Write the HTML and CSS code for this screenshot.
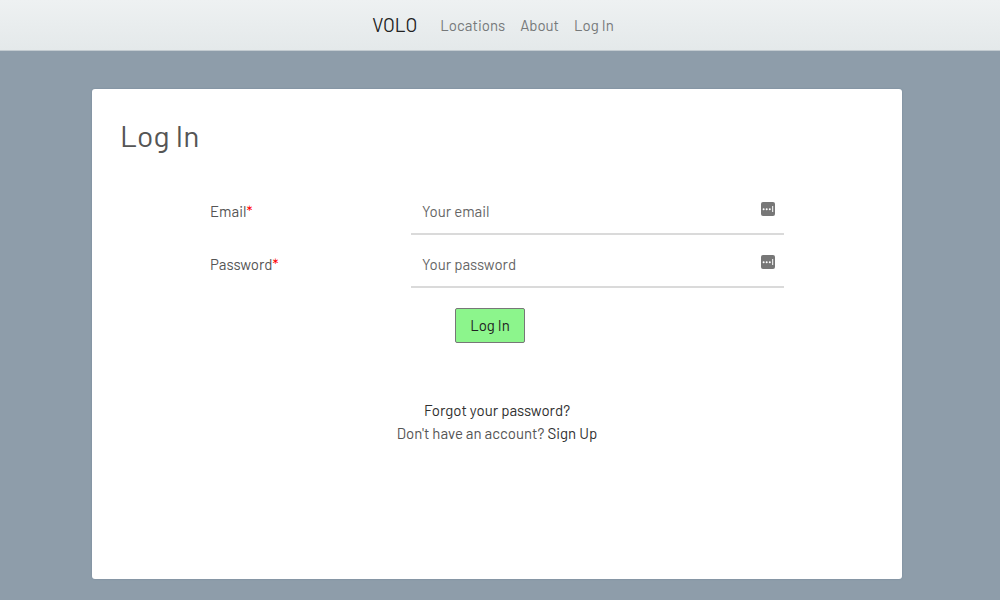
FILE: index.html
```html
<!DOCTYPE html>
<html lang="en">
<head>
<meta charset="utf-8">
<meta name="viewport" content="width=device-width, initial-scale=1">
<title>VOLO - Log In</title>
<link rel="stylesheet" href="styles.css">
</head>
<body>
<header class="navbar">
  <nav class="nav">
    <a class="brand" href="#">VOLO</a>
    <a class="nav-link" href="#">Locations</a>
    <a class="nav-link" href="#">About</a>
    <a class="nav-link" href="#">Log In</a>
  </nav>
</header>
<main class="page">
  <section class="card">
    <h1 class="title">Log In</h1>
    <form class="form">
      <div class="field">
        <label class="label" for="email">Email<span class="required">*</span></label>
        <div class="control">
          <input class="input" id="email" type="email" placeholder="Your email">
          <svg class="key-icon" viewBox="0 0 14 14" aria-hidden="true"><rect width="14" height="14" rx="2" fill="#777"/><circle cx="2.6" cy="7.2" r="1" fill="#fff"/><circle cx="5.7" cy="7.2" r="1" fill="#fff"/><circle cx="8.8" cy="7.2" r="1" fill="#fff"/><path d="M11.7 4v6" stroke="#fff"/></svg>
        </div>
      </div>
      <div class="field">
        <label class="label" for="password">Password<span class="required">*</span></label>
        <div class="control">
          <input class="input" id="password" type="password" placeholder="Your password">
          <svg class="key-icon" viewBox="0 0 14 14" aria-hidden="true"><rect width="14" height="14" rx="2" fill="#777"/><circle cx="2.6" cy="7.2" r="1" fill="#fff"/><circle cx="5.7" cy="7.2" r="1" fill="#fff"/><circle cx="8.8" cy="7.2" r="1" fill="#fff"/><path d="M11.7 4v6" stroke="#fff"/></svg>
        </div>
      </div>
      <button class="submit" type="submit">Log In</button>
    </form>
    <div class="links">
      <p class="line"><a class="link" href="#">Forgot your password?</a></p>
      <p class="line">Don't have an account? <a class="link" href="#">Sign Up</a></p>
    </div>
  </section>
</main>
</body>
</html>
```
FILE: styles.css
```css
* {
  box-sizing: border-box;
}

body {
  margin: 0;
  min-height: 100vh;
  display: flex;
  flex-direction: column;
  background: #8e9daa;
  color: #555;
  font-family: Barlow, Roboto, sans-serif;
  font-size: 15px;
  line-height: 23px;
}

.navbar {
  padding: 10px 16px;
  background: linear-gradient(#eef1f2, #e4e9ea);
  border-bottom: 1px solid #c3cbd0;
}

.nav {
  display: flex;
  justify-content: center;
  align-items: center;
  gap: 15px;
  padding-right: 14px;
  line-height: 30px;
}

.brand {
  margin-right: 8px;
  color: #222;
  font-size: 19px;
  text-decoration: none;
}

.nav-link {
  color: #76797a;
  text-decoration: none;
}

.page {
  flex: 1;
  display: flex;
  padding: 38px 98px 21px 92px;
}

.card {
  flex: 1;
  padding: 26px 28px;
  background: #fff;
  border-radius: 3px;
  box-shadow: 0 0 2px #74879a;
}

.title {
  margin: 0 0 33px;
  font-size: 30px;
  font-weight: 400;
  line-height: 40px;
}

.form {
  display: flex;
  flex-direction: column;
  max-width: 574px;
  margin: 0 auto;
}

.field {
  display: grid;
  grid-template-columns: 35% 1fr;
  margin-bottom: 6px;
}

.label {
  padding-top: 12px;
}

.required {
  color: #f00;
}

.control {
  position: relative;
}

.input {
  display: block;
  width: 100%;
  height: 47px;
  padding: 0 36px 0 11px;
  border: 0;
  border-bottom: 2px solid #dadada;
  background: transparent;
  color: #555;
  font: inherit;
}

.input::placeholder {
  color: #666;
  opacity: 1;
}

.key-icon {
  position: absolute;
  top: 14px;
  right: 9px;
  width: 14px;
  height: 14px;
}

.submit {
  align-self: center;
  margin: 14px 14px 0 0;
  padding: 5px 14px;
  background: #8cf58c;
  border: 1px solid #777;
  border-radius: 2px;
  color: #222;
  font: inherit;
}

.links {
  margin-top: 56px;
  text-align: center;
}

.line {
  margin: 0;
}

.link {
  color: #303030;
  text-decoration: none;
}
```
